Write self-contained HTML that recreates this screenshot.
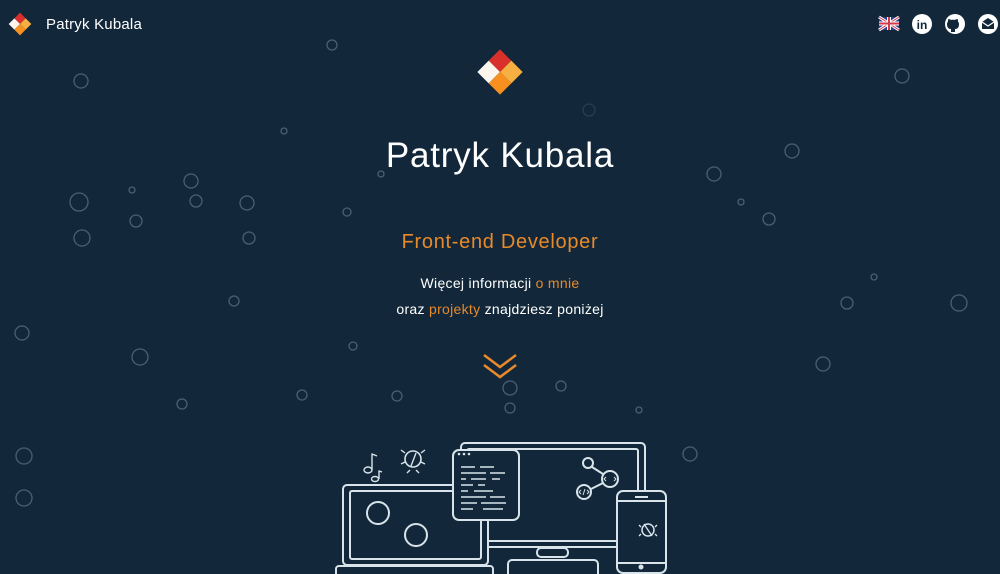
<!DOCTYPE html>
<html><head><meta charset="utf-8"><style>
html,body{margin:0;padding:0;}
body{width:1000px;height:574px;overflow:hidden;background:#12283a;font-family:"Liberation Sans",sans-serif;position:relative;color:#fff;}
.t{position:absolute;left:0;width:1000px;text-align:center;}
.o{color:#e8892a;}
</style></head><body>
<svg width="1000" height="574" style="position:absolute;left:0;top:0" xmlns="http://www.w3.org/2000/svg">
<g fill="none" stroke="#5d7384" stroke-width="1.3" opacity="0.75">
<circle cx="81" cy="81" r="7"/><circle cx="332" cy="45" r="5"/><circle cx="902" cy="76" r="7"/><circle cx="284" cy="131" r="3"/>
<circle cx="792" cy="151" r="7"/><circle cx="714" cy="174" r="7"/><circle cx="191" cy="181" r="7"/><circle cx="132" cy="190" r="3"/>
<circle cx="79" cy="202" r="9"/><circle cx="196" cy="201" r="6"/><circle cx="247" cy="203" r="7"/><circle cx="347" cy="212" r="4"/>
<circle cx="741" cy="202" r="3"/><circle cx="769" cy="219" r="6"/><circle cx="136" cy="221" r="6"/><circle cx="82" cy="238" r="8"/>
<circle cx="249" cy="238" r="6"/><circle cx="874" cy="277" r="3"/><circle cx="234" cy="301" r="5"/><circle cx="847" cy="303" r="6"/>
<circle cx="959" cy="303" r="8"/><circle cx="22" cy="333" r="7"/><circle cx="353" cy="346" r="4"/><circle cx="140" cy="357" r="8"/>
<circle cx="823" cy="364" r="7"/><circle cx="510" cy="388" r="7"/><circle cx="561" cy="386" r="5"/><circle cx="302" cy="395" r="5"/>
<circle cx="397" cy="396" r="5"/><circle cx="182" cy="404" r="5"/><circle cx="510" cy="408" r="5"/><circle cx="639" cy="410" r="3"/>
<circle cx="690" cy="454" r="7"/><circle cx="24" cy="456" r="8"/><circle cx="24" cy="498" r="8"/><circle cx="589" cy="110" r="6" opacity="0.4"/><circle cx="381" cy="174" r="3"/>
</g>
<g transform="translate(20,24) rotate(45)">
<rect x="-8" y="-8" width="8" height="8" fill="#d9302c"/><rect x="0" y="-8" width="8" height="8" fill="#f5b041"/>
<rect x="-8" y="0" width="8" height="8" fill="#fdf6ec"/><rect x="0" y="0" width="8" height="8" fill="#f7901e"/>
</g>
<g transform="translate(500,72) rotate(45)">
<rect x="-16" y="-16" width="16" height="16" fill="#d9302c"/><rect x="0" y="-16" width="16" height="16" fill="#f5b041"/>
<rect x="-16" y="0" width="16" height="16" fill="#fdf6ec"/><rect x="0" y="0" width="16" height="16" fill="#f7901e"/>
</g>
<g transform="translate(879,17)">
<rect width="20" height="13" fill="#2b3f8a"/>
<path d="M0 0L20 13M20 0L0 13" stroke="#fff" stroke-width="3"/>
<path d="M0 0L20 13M20 0L0 13" stroke="#d03a4a" stroke-width="1"/>
<path d="M10 0V13M0 6.5H20" stroke="#fff" stroke-width="4"/>
<path d="M10 0V13M0 6.5H20" stroke="#d03a4a" stroke-width="2"/>
</g>
<circle cx="922" cy="24" r="10" fill="#fff"/>
<text x="922" y="29" font-size="12" font-weight="bold" fill="#12283a" text-anchor="middle" font-family="Liberation Sans">in</text>
<circle cx="955" cy="24" r="10" fill="#fff"/>
<path d="M951 32v-3c-3 0-4-2-4-5 0-1 .5-2 1-2.5 0-1 0-2 .5-2.5 1 0 2 .5 2.5 1 1-.3 3-.3 4 0 .5-.5 1.5-1 2.5-1 .5.5.5 1.5.5 2.5.5.5 1 1.5 1 2.5 0 3-1 5-4 5v3" fill="#12283a"/>
<circle cx="988" cy="24" r="10" fill="#fff"/>
<path d="M982 22l6-4 6 4v7h-12z" fill="#12283a"/><path d="M982 22l6 4 6-4" fill="none" stroke="#fff" stroke-width="1.2"/>
<path d="M484 355l16 12 16-12M484 365l16 12 16-12" fill="none" stroke="#e8892a" stroke-width="2.5"/>
<g fill="none" stroke="#d8e4ea" stroke-width="2" stroke-linejoin="round">
<rect x="461" y="443" width="184" height="104" rx="4"/>
<rect x="467" y="449" width="171" height="92" rx="2"/>
<rect x="537" y="548" width="31" height="9" rx="4"/>
<path d="M508 574v-10a4 4 0 0 1 4-4h82a4 4 0 0 1 4 4v10"/>
<rect x="343" y="485" width="145" height="80" rx="4" fill="#12283a"/>
<rect x="350" y="491" width="131" height="68" rx="2"/>
<path d="M336 574v-5a3 3 0 0 1 3-3h151a3 3 0 0 1 3 3v5"/>
<circle cx="378" cy="513" r="11"/><circle cx="416" cy="535" r="11"/>
<rect x="453" y="450" width="66" height="70" rx="6" fill="#12283a"/>
<rect x="617" y="491" width="49" height="82" rx="6" fill="#12283a"/>
<path d="M618 501h47M618 563h47M635 497h13"/>
<circle cx="588" cy="463" r="5"/><circle cx="610" cy="479" r="8"/><circle cx="584" cy="492" r="7"/>
<path d="M592 467l11 7M591 489l12-6"/>
<circle cx="413" cy="459" r="8" stroke-width="1.6"/><path d="M405 453l-4-3M421 453l4-3M405 462l-4 2M421 462l4 2M410 470l-3 3M416 470l3 3M411 466l5-13" stroke-width="1.4"/>
<path d="M372 470v-16l5 2M379 479v-8l3 1" stroke-width="1.4"/><ellipse cx="368" cy="470" rx="4" ry="3" stroke-width="1.4"/><ellipse cx="375" cy="479" rx="3.5" ry="2.5" stroke-width="1.4"/>
<circle cx="648" cy="530" r="6" stroke-width="1.5"/><path d="M644 524l8 12M641 527l-2-2M655 527l2-2M641 534l-2 2M655 534l2 2" stroke-width="1.3"/>
</g>
<g stroke="#d8e4ea" stroke-width="1" fill="none"><path d="M606 477l-2 2 2 2M614 477l2 2-2 2M581 490l-2 2 2 2M587 490l2 2-2 2M585 489l-2 6"/></g>
<circle cx="641" cy="567" r="2.5" fill="#d8e4ea"/>
<g fill="#d8e4ea"><circle cx="459" cy="454" r="1.3"/><circle cx="464" cy="454" r="1.3"/><circle cx="469" cy="454" r="1.3"/></g>
<g stroke="#d8e4ea" stroke-width="1.6">
<path d="M461 467h14M480 467h14M461 473h25M490 473h15M461 479h5M471 479h15M492 479h8M461 485h12M478 485h7M461 491h7M474 491h19M461 497h25M490 497h15M461 503h16M481 503h25M461 509h12M483 509h20"/>
</g>
</svg>
<div class="t" style="top:16px;left:46px;width:auto;text-align:left;font-size:15px;letter-spacing:0.2px;">Patryk Kubala</div>
<div class="t" style="top:136px;font-size:35px;letter-spacing:0.8px;">Patryk Kubala</div>
<div class="t o" style="top:231px;font-size:20px;letter-spacing:0.7px;">Front-end Developer</div>
<div class="t" style="top:275px;font-size:14px;letter-spacing:0.3px;">Więcej informacji <span class="o">o mnie</span></div>
<div class="t" style="top:301px;font-size:14px;letter-spacing:0.3px;">oraz <span class="o">projekty</span> znajdziesz poniżej</div>
</body></html>
